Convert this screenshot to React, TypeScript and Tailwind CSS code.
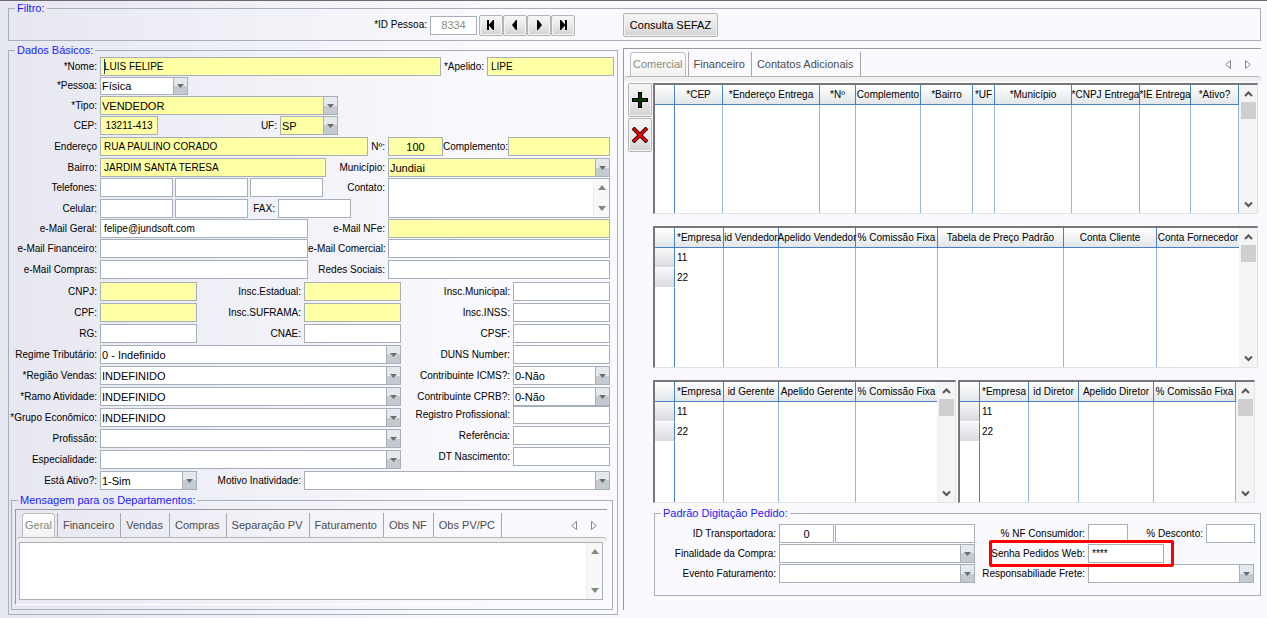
import React from 'react';
import clsx from 'clsx';

interface FieldLabelProps {
  htmlFor: string;
  className?: string;
  children: React.ReactNode;
}

const FieldLabel: React.FC<FieldLabelProps> = ({ htmlFor, className = 'w-[91px]', children }) => (
  <label htmlFor={htmlFor} className={clsx('shrink-0 self-center pr-[3px] text-right text-[10px] leading-4 whitespace-nowrap', className)}>
    {children}
  </label>
);

interface TextFieldProps {
  id: string;
  value?: string;
  type?: string;
  label?: string;
  required?: boolean;
  className?: string;
}

const TextField: React.FC<TextFieldProps> = ({ id, value = '', type = 'text', label, required, className = 'text-[10px]' }) => (
  <input
    id={id}
    type={type}
    aria-label={label}
    defaultValue={value}
    className={clsx('h-full min-w-0 border border-[#a7b0b8] px-[3px] outline-none', required ? 'bg-[#ffffa6]' : 'bg-white', className)}
  />
);

const SelectField: React.FC<TextFieldProps> = ({ id, value = '', required, className }) => (
  <span className={clsx('relative flex h-full min-w-0', className)}>
    <select
      id={id}
      defaultValue={value}
      className={clsx('w-full appearance-none border border-[#a7b0b8] pr-4 pl-px text-[11px] leading-4 outline-none', required ? 'bg-[#ffffa6]' : 'bg-white')}
    >
      <option value={value}>{value}</option>
    </select>
    <span className="pointer-events-none absolute inset-y-0 right-0 flex w-[15px] items-center justify-center border border-[#a7b0b8] bg-linear-to-b from-[#e4e9ed] from-50% to-[#c3cbd0] to-50%">
      <svg width="7" height="4" viewBox="0 0 7 4" className="fill-[#6b6f70]">
        <path d="M0 0h7L3.5 4z" />
      </svg>
    </span>
  </span>
);

const Row: React.FC<{ className?: string; children: React.ReactNode }> = ({ className = 'mt-0.5 h-[19px]', children }) => (
  <div className={clsx('flex', className)}>{children}</div>
);

interface GroupBoxProps {
  title: string;
  className?: string;
  children: React.ReactNode;
}

const GroupBox: React.FC<GroupBoxProps> = ({ title, className, children }) => (
  <fieldset className={clsx('min-w-0 border border-[#a7b0b8]', className)}>
    <legend className="ml-1.5 px-0.5 text-[11px] leading-[14px] text-[#1a1aff]">{title}</legend>
    {children}
  </fieldset>
);

const TabBar: React.FC<{ tabs: string[] }> = ({ tabs }) => (
  <div>
    <div className="flex h-6 items-stretch pl-1.5 text-[11px]" role="tablist">
      {tabs.map((tab, i) => (
        <button
          key={tab}
          type="button"
          role="tab"
          aria-selected={i === 0}
          className={clsx(
            'whitespace-nowrap',
            i === 0
              ? 'rounded-t border border-b-0 border-[#bcbcbc] bg-linear-to-b from-white to-[#f2f2f2] px-0.5 text-[#868e7c]'
              : 'border-r border-[#a8a8a8] pr-1.5 pl-[5px] text-[#4c4c4c]',
            i === 1 && 'ml-0.5 border-l'
          )}
        >
          {tab}
        </button>
      ))}
      <div className="ml-auto flex items-center gap-3.5 pr-2.5">
        <button type="button" aria-label="Aba anterior">
          <svg width="6" height="9" viewBox="0 0 6 9" className="fill-white stroke-[#7d8a7d]">
            <path d="M5.5.5v8L.8 4.5z" />
          </svg>
        </button>
        <button type="button" aria-label="Próxima aba">
          <svg width="6" height="9" viewBox="0 0 6 9" className="fill-white stroke-[#7d8a7d]">
            <path d="M.5.5v8l4.7-4z" />
          </svg>
        </button>
      </div>
    </div>
    <div className="h-[5px] rounded-t border-t border-[#b8b8b8] bg-[#efeff0]" />
  </div>
);

const navPaths = [
  { label: 'Primeiro', d: 'M2 1h2v4.500L8 1h1v10H8L4 6.500V11H2z' },
  { label: 'Anterior', d: 'M8 1v10H7L3 6l4-5z' },
  { label: 'Próximo', d: 'M4 1v10h1l4-5-4-5z' },
  { label: 'Último', d: 'M10 1H8v4.500L4 1H3v10h1l4-4.500V11h2z' },
];

const buttonFace =
  'flex items-center justify-center whitespace-nowrap rounded-xs border border-[#b4b4b4] bg-linear-to-b from-[#f6f6f6] via-[#e9e9e9] via-50% to-[#d2d2d4] shadow-[inset_0_0_0_1px_#f4f4f4]';

interface GridColumn {
  title: string;
  width: string;
}

const DataGrid: React.FC<{ columns: GridColumn[]; rows?: string[]; className: string }> = ({ columns, rows = [], className }) => (
  <div className={clsx('flex min-w-0 border-t-2 border-r border-b border-l-2 border-t-[#77777a] border-r-[#e2e2e2] border-b-[#e2e2e2] border-l-[#77777a] bg-white', className)}>
    <div className="min-w-0 flex-1">
      <table className="h-full w-full table-fixed border-separate border-spacing-0 text-[10px] leading-4">
        <colgroup>
          <col className="w-5" />
          {columns.map(col => (
            <col key={col.title} className={col.width} />
          ))}
        </colgroup>
        <thead>
          <tr className="h-5 bg-linear-to-b from-white to-[#e1e5e7]">
            <th className="border-r border-b border-[#4a80c4] p-0" />
            {columns.map(col => (
              <th key={col.title} className="border-r border-b border-[#4a80c4] p-0 font-normal whitespace-nowrap">
                <span className="flex justify-center">{col.title}</span>
              </th>
            ))}
          </tr>
        </thead>
        <tbody>
          {rows.map(row => (
            <tr key={row} className="h-5">
              <td className="border-r border-b border-r-[#4a80c4] border-b-white bg-linear-to-b from-[#f8f8fa] to-[#d9dbdf] p-0" />
              {columns.map((col, i) => (
                <td key={col.title} className="border-r border-[#9ab6dc] py-0 pl-0.5">
                  {i === 0 ? row : ''}
                </td>
              ))}
            </tr>
          ))}
          <tr>
            <td className="border-r border-[#4a80c4] p-0" />
            {columns.map(col => (
              <td key={col.title} className="border-r border-[#9ab6dc] p-0" />
            ))}
          </tr>
        </tbody>
      </table>
    </div>
    <div className="flex w-[18px] shrink-0 flex-col items-center bg-[#f4f4f4]">
      <svg width="9" height="17" viewBox="0 0 9 17" className="fill-none stroke-[#555] stroke-2">
        <path d="M1 11l3.5-3.5L8 11" />
      </svg>
      <div className="h-[17px] w-[15px] bg-[#cfcfcf]" />
      <svg width="9" height="17" viewBox="0 0 9 17" className="mt-auto fill-none stroke-[#555] stroke-2">
        <path d="M1 6.5L4.500 10 8 6.500" />
      </svg>
    </div>
  </div>
);

const enderecoColumns: GridColumn[] = [
  { title: '*CEP', width: 'w-[48px]' },
  { title: '*Endereço Entrega', width: 'w-[97px]' },
  { title: '*Nº', width: 'w-[36px]' },
  { title: 'Complemento', width: 'w-[65px]' },
  { title: '*Bairro', width: 'w-[52px]' },
  { title: '*UF', width: 'w-[22px]' },
  { title: '*Município', width: 'w-[77px]' },
  { title: '*CNPJ Entrega', width: 'w-[68px]' },
  { title: '*IE Entrega', width: 'w-[51px]' },
  { title: '*Ativo?', width: 'w-[48px]' },
];

const vendedorColumns: GridColumn[] = [
  { title: '*Empresa', width: 'w-[49px]' },
  { title: 'id Vendedor', width: 'w-[55px]' },
  { title: 'Apelido Vendedor', width: 'w-[77px]' },
  { title: '% Comissão Fixa', width: 'w-[82px]' },
  { title: 'Tabela de Preço Padrão', width: 'w-[126px]' },
  { title: 'Conta Cliente', width: 'w-[93px]' },
  { title: 'Conta Fornecedor', width: 'w-[83px]' },
];

const gerenteColumns: GridColumn[] = [
  { title: '*Empresa', width: 'w-[49px]' },
  { title: 'id Gerente', width: 'w-[55px]' },
  { title: 'Apelido Gerente', width: 'w-[77px]' },
  { title: '% Comissão Fixa', width: 'w-[82px]' },
];

const diretorColumns: GridColumn[] = [
  { title: '*Empresa', width: 'w-[49px]' },
  { title: 'id Diretor', width: 'w-[50px]' },
  { title: 'Apelido Diretor', width: 'w-[75px]' },
  { title: '% Comissão Fixa', width: 'w-[82px]' },
];

const ScrollTrack: React.FC = () => (
  <span className="pointer-events-none absolute inset-y-px right-px flex w-4 flex-col items-center justify-between border-l border-[#ececec] bg-[#f8f8f8] py-1.5">
    <svg width="8" height="5" viewBox="0 0 8 5" className="fill-[#7f8a7f]">
      <path d="M0 5h8L4 0z" />
    </svg>
    <svg width="8" height="5" viewBox="0 0 8 5" className="fill-[#7f8a7f]">
      <path d="M0 0h8L4 5z" />
    </svg>
  </span>
);

const FilterBar: React.FC = () => (
  <GroupBox title="Filtro:" className="h-10">
    <div className="-mt-0.5 grid grid-cols-[610fr_638fr] gap-[5px]">
      <div className="flex items-center justify-end pr-[43px]">
        <FieldLabel htmlFor="idPessoa" className="">*ID Pessoa:</FieldLabel>
        <div className="flex h-[19px]">
          <TextField id="idPessoa" value="8334" className="w-[47px] text-center text-[11px] text-[#868e7c]" />
        </div>
        <div className="ml-0.5 flex">
          {navPaths.map(nav => (
            <button key={nav.label} type="button" aria-label={nav.label} className={clsx(buttonFace, 'h-[21px] w-6')}>
              <svg width="12" height="12" viewBox="0 0 12 12" className="fill-black">
                <path d={nav.d} />
              </svg>
            </button>
          ))}
        </div>
      </div>
      <div>
        <button type="button" className={clsx(buttonFace, 'h-6 w-[95px] text-[11px]')}>
          Consulta SEFAZ
        </button>
      </div>
    </div>
  </GroupBox>
);

const BasicData: React.FC = () => (
  <GroupBox title="Dados Básicos:" className="pb-1">
    <div className="pr-[7px]">
      <Row className="-mr-1 h-[19px]">
        <FieldLabel htmlFor="nome">*Nome:</FieldLabel>
        <span className="relative flex min-w-0 flex-1">
          <TextField id="nome" value="LUIS FELIPE" required className="w-full text-[10px]" />
          <span className="pointer-events-none absolute top-0.5 left-1 h-[15px] w-px bg-[#1c3f66]" />
        </span>
        <FieldLabel htmlFor="apelido" className="w-[46px]">*Apelido:</FieldLabel>
        <TextField id="apelido" value="LIPE" required className="w-[127px] text-[10px]" />
      </Row>
      <Row className="mt-px h-[18px]">
        <FieldLabel htmlFor="pessoa">*Pessoa:</FieldLabel>
        <SelectField id="pessoa" value="Física" className="w-[88px]" />
      </Row>
      <Row className="mt-px h-[19px]">
        <FieldLabel htmlFor="tipo">*Tipo:</FieldLabel>
        <SelectField id="tipo" value="VENDEDOR" required className="w-[238px]" />
      </Row>
      <Row className="mt-px h-[19px]">
        <FieldLabel htmlFor="cep">CEP:</FieldLabel>
        <TextField id="cep" value="13211-413" required className="w-[58px] text-center text-[10px]" />
        <FieldLabel htmlFor="uf" className="w-[122px]">UF:</FieldLabel>
        <SelectField id="uf" value="SP" required className="w-[58px]" />
      </Row>
      <Row>
        <FieldLabel htmlFor="endereco">Endereço</FieldLabel>
        <TextField id="endereco" value="RUA PAULINO CORADO" required className="flex-1 text-[10px]" />
        <FieldLabel htmlFor="numero" className="w-5">Nº:</FieldLabel>
        <TextField id="numero" value="100" required className="w-[55px] text-center text-[11px]" />
        <FieldLabel htmlFor="complemento" className="w-[65px] pr-0">Complemento:</FieldLabel>
        <TextField id="complemento" required className="w-[102px] text-[10px]" />
      </Row>
      <Row>
        <FieldLabel htmlFor="bairro">Bairro:</FieldLabel>
        <TextField id="bairro" value="JARDIM SANTA TERESA" required className="flex-1 text-[10px]" />
        <FieldLabel htmlFor="municipio" className="w-[62px]">Município:</FieldLabel>
        <SelectField id="municipio" value="Jundiai" required className="w-[222px]" />
      </Row>

      <div className="mt-px flex">
        <div className="min-w-0 flex-1">
          <Row className="h-[19px] gap-0.5">
            <FieldLabel htmlFor="telefone1" className="-mr-0.5 w-[91px]">Telefones:</FieldLabel>
            <TextField id="telefone1" className="w-[73px] text-[10px]" />
            <TextField id="telefone2" label="Telefone 2" className="w-[73px] text-[10px]" />
            <TextField id="telefone3" label="Telefone 3" className="w-[73px] text-[10px]" />
            <FieldLabel htmlFor="contato" className="ml-auto">Contato:</FieldLabel>
          </Row>
          <Row>
            <FieldLabel htmlFor="celular1">Celular:</FieldLabel>
            <TextField id="celular1" className="mr-0.5 w-[73px] text-[10px]" />
            <TextField id="celular2" label="Celular 2" className="w-[73px] text-[10px]" />
            <FieldLabel htmlFor="fax" className="w-[30px]">FAX:</FieldLabel>
            <TextField id="fax" className="w-[73px] text-[10px]" />
          </Row>
        </div>
        <span className="relative flex h-10 w-[222px] shrink-0">
          <textarea id="contato" className="w-full resize-none border border-[#a7b0b8] bg-white px-1 text-[10px] outline-none" />
          <ScrollTrack />
        </span>
      </div>

      <Row className="mt-px h-[19px]">
        <FieldLabel htmlFor="emailGeral">e-Mail Geral:</FieldLabel>
        <TextField id="emailGeral" value="felipe@jundsoft.com" className="flex-1 text-[10px]" />
        <FieldLabel htmlFor="emailNfe" className="w-20">e-Mail NFe:</FieldLabel>
        <TextField id="emailNfe" required className="w-[222px] text-[10px]" />
      </Row>
      <Row className="mt-px h-[19px]">
        <FieldLabel htmlFor="emailFinanceiro">e-Mail Financeiro:</FieldLabel>
        <TextField id="emailFinanceiro" className="flex-1 text-[10px]" />
        <FieldLabel htmlFor="emailComercial" className="w-20">e-Mail Comercial:</FieldLabel>
        <TextField id="emailComercial" className="w-[222px] text-[10px]" />
      </Row>
      <Row>
        <FieldLabel htmlFor="emailCompras">e-Mail Compras:</FieldLabel>
        <TextField id="emailCompras" className="flex-1 text-[10px]" />
        <FieldLabel htmlFor="redes" className="w-20">Redes Sociais:</FieldLabel>
        <TextField id="redes" className="w-[222px] text-[10px]" />
      </Row>

      <div className="mt-px flex">
        <div className="w-[392px]">
          <Row>
            <FieldLabel htmlFor="cnpj">CNPJ:</FieldLabel>
            <TextField id="cnpj" required className="w-[97px] text-[10px]" />
            <FieldLabel htmlFor="inscEstadual" className="w-[107px]">Insc.Estadual:</FieldLabel>
            <TextField id="inscEstadual" required className="w-[97px] text-[10px]" />
          </Row>
          <Row>
            <FieldLabel htmlFor="cpf">CPF:</FieldLabel>
            <TextField id="cpf" required className="w-[97px] text-[10px]" />
            <FieldLabel htmlFor="suframa" className="w-[107px]">Insc.SUFRAMA:</FieldLabel>
            <TextField id="suframa" required className="w-[97px] text-[10px]" />
          </Row>
          <Row>
            <FieldLabel htmlFor="rg">RG:</FieldLabel>
            <TextField id="rg" className="w-[97px] text-[10px]" />
            <FieldLabel htmlFor="cnae" className="w-[107px]">CNAE:</FieldLabel>
            <TextField id="cnae" className="w-[97px] text-[10px]" />
          </Row>
          <Row>
            <FieldLabel htmlFor="regime">Regime Tributário:</FieldLabel>
            <SelectField id="regime" value="0 - Indefinido" className="flex-1" />
          </Row>
          <Row>
            <FieldLabel htmlFor="regiao">*Região Vendas:</FieldLabel>
            <SelectField id="regiao" value="INDEFINIDO" className="flex-1" />
          </Row>
          <Row>
            <FieldLabel htmlFor="ramo">*Ramo Atividade:</FieldLabel>
            <SelectField id="ramo" value="INDEFINIDO" className="flex-1" />
          </Row>
          <Row>
            <FieldLabel htmlFor="grupo">*Grupo Econômico:</FieldLabel>
            <SelectField id="grupo" value="INDEFINIDO" className="flex-1" />
          </Row>
          <Row>
            <FieldLabel htmlFor="profissao">Profissão:</FieldLabel>
            <SelectField id="profissao" className="flex-1" />
          </Row>
          <Row>
            <FieldLabel htmlFor="especialidade">Especialidade:</FieldLabel>
            <SelectField id="especialidade" className="flex-1" />
          </Row>
        </div>
        <div className="flex-1">
          <Row>
            <FieldLabel htmlFor="inscMunicipal" className="ml-auto">Insc.Municipal:</FieldLabel>
            <TextField id="inscMunicipal" className="w-[97px] text-[10px]" />
          </Row>
          <Row>
            <FieldLabel htmlFor="inss" className="ml-auto">Insc.INSS:</FieldLabel>
            <TextField id="inss" className="w-[97px] text-[10px]" />
          </Row>
          <Row>
            <FieldLabel htmlFor="cpsf" className="ml-auto">CPSF:</FieldLabel>
            <TextField id="cpsf" className="w-[97px] text-[10px]" />
          </Row>
          <Row>
            <FieldLabel htmlFor="duns" className="ml-auto">DUNS Number:</FieldLabel>
            <TextField id="duns" className="w-[97px] text-[10px]" />
          </Row>
          <Row>
            <FieldLabel htmlFor="icms" className="ml-auto">Contribuinte ICMS?:</FieldLabel>
            <SelectField id="icms" value="0-Não" className="w-[97px]" />
          </Row>
          <Row>
            <FieldLabel htmlFor="cprb" className="ml-auto">Contribuinte CPRB?:</FieldLabel>
            <SelectField id="cprb" value="0-Não" className="w-[97px]" />
          </Row>
          <Row className="h-[18px]">
            <FieldLabel htmlFor="registro" className="ml-auto">Registro Profissional:</FieldLabel>
            <TextField id="registro" className="w-[97px] text-[10px]" />
          </Row>
          <Row>
            <FieldLabel htmlFor="referencia" className="ml-auto">Referência:</FieldLabel>
            <TextField id="referencia" className="w-[97px] text-[10px]" />
          </Row>
          <Row>
            <FieldLabel htmlFor="nascimento" className="ml-auto">DT Nascimento:</FieldLabel>
            <TextField id="nascimento" className="w-[97px] text-[10px]" />
          </Row>
        </div>
      </div>

      <Row>
        <FieldLabel htmlFor="ativo">Está Ativo?:</FieldLabel>
        <SelectField id="ativo" value="1-Sim" className="w-[97px]" />
        <FieldLabel htmlFor="motivo" className="w-[107px]">Motivo Inatividade:</FieldLabel>
        <SelectField id="motivo" className="flex-1" />
      </Row>
    </div>

    <GroupBox title="Mensagem para os Departamentos:" className="mt-[3px] mr-1 ml-0.5 pb-1">
      <div className="mt-0.5 mr-[5px] ml-[3px] border-t border-b border-l border-t-[#9a9a9e] border-b-white border-l-[#9a9a9e] pt-[3px] pb-1">
        <TabBar tabs={['Geral', 'Financeiro', 'Vendas', 'Compras', 'Separação PV', 'Faturamento', 'Obs NF', 'Obs PV/PC']} />
        <span className="relative mr-1 ml-[3px] flex h-[58px]">
          <textarea aria-label="Mensagem" className="w-full resize-none border border-[#a7b0b8] bg-white px-1 text-[10px] outline-none" />
          <ScrollTrack />
        </span>
      </div>
    </GroupBox>
  </GroupBox>
);

const OrderDefaults: React.FC = () => (
  <GroupBox title="Padrão Digitação Pedido:" className="mt-[3px] ml-px pt-1 pb-3">
    <Row className="h-[19px]">
      <FieldLabel htmlFor="transportadora" className="w-[124px]">ID Transportadora:</FieldLabel>
      <TextField id="transportadora" value="0" className="mr-px w-[55px] text-center text-[11px]" />
      <TextField id="transportadoraNome" label="Transportadora" className="flex-1 text-[10px]" />
      <div className="flex w-[285px] shrink-0">
        <FieldLabel htmlFor="nfConsumidor" className="w-[113px]">% NF Consumidor:</FieldLabel>
        <TextField id="nfConsumidor" className="w-10 text-[10px]" />
        <FieldLabel htmlFor="desconto" className="w-[78px]">% Desconto:</FieldLabel>
        <TextField id="desconto" className="w-[49px] text-[10px]" />
      </div>
    </Row>
    <Row className="mt-px h-[19px]">
      <FieldLabel htmlFor="finalidade" className="w-[124px]">Finalidade da Compra:</FieldLabel>
      <SelectField id="finalidade" className="flex-1" />
      <div className="relative z-10 flex w-[285px] shrink-0">
        <FieldLabel htmlFor="senha" className="w-[113px]">Senha Pedidos Web:</FieldLabel>
        <TextField id="senha" value="****" className="w-[76px] text-[10px]" />
        <span className="pointer-events-none absolute -top-1 -bottom-1 left-3.5 w-[185px] rounded-xs border-3 border-[#ff0000]" />
      </div>
    </Row>
    <Row className="mt-px h-[19px]">
      <FieldLabel htmlFor="evento" className="w-[124px]">Evento Faturamento:</FieldLabel>
      <SelectField id="evento" className="flex-1" />
      <div className="flex w-[285px] shrink-0">
        <FieldLabel htmlFor="frete" className="w-[113px]">Responsabiliade Frete:</FieldLabel>
        <SelectField id="frete" className="w-[166px]" />
      </div>
    </Row>
  </GroupBox>
);

const CommercialPanel: React.FC = () => (
  <section className="mt-[5px] mb-0.5 min-w-0 border-t border-l border-[#9a9a9e] pt-[3px] pb-3.5">
    <TabBar tabs={['Comercial', 'Financeiro', 'Contatos Adicionais']} />
    <div className="mt-0.5 flex gap-px pl-1">
      <div className="flex w-6 shrink-0 flex-col gap-px">
        <button type="button" aria-label="Adicionar" className={clsx(buttonFace, 'h-[34px]')}>
          <svg width="16" height="16" viewBox="0 0 16 16">
            <path d="M6 0h4v6h6v4h-6v6H6v-6H0V6h6z" fill="#000" />
            <path d="M7 1h2v6h6v2H9v6H7V9H1V7h6z" fill="#063806" />
          </svg>
        </button>
        <button type="button" aria-label="Remover" className={clsx(buttonFace, 'h-[34px]')}>
          <svg width="16" height="16" viewBox="0 0 16 16">
            <path d="M1 1l14 14M15 1L1 15" stroke="#000" strokeWidth="4" />
            <path d="M1.500 1.500l13 13M14.500 1.500l-13 13" stroke="#ff0000" strokeWidth="2.400" />
          </svg>
        </button>
      </div>
      <div className="min-w-0 flex-1">
        <div className="mr-[3px] flex flex-col">
          <DataGrid columns={enderecoColumns} className="h-[131px]" />
          <DataGrid columns={vendedorColumns} rows={['11', '22']} className="mt-3 h-[142px]" />
          <div className="mt-3 mr-[3px] grid grid-cols-[303fr_297fr] gap-0.5">
            <DataGrid columns={gerenteColumns} rows={['11', '22']} className="h-[123px]" />
            <DataGrid columns={diretorColumns} rows={['11', '22']} className="h-[123px]" />
          </div>
        </div>
        <OrderDefaults />
      </div>
    </div>
  </section>
);

export default function App() {
  return (
    <div className="min-h-screen border-t border-[#6a6a6a] bg-linear-to-r from-[#e7e7f1] via-[#fafafe] via-40% to-[#fafafe] pr-1.5 pl-2 font-['Liberation_Sans',Arial,sans-serif] text-black">
      <FilterBar />
      <main className="mt-0.5 grid grid-cols-[610fr_638fr] items-start gap-[5px]">
        <BasicData />
        <CommercialPanel />
      </main>
    </div>
  );
}
